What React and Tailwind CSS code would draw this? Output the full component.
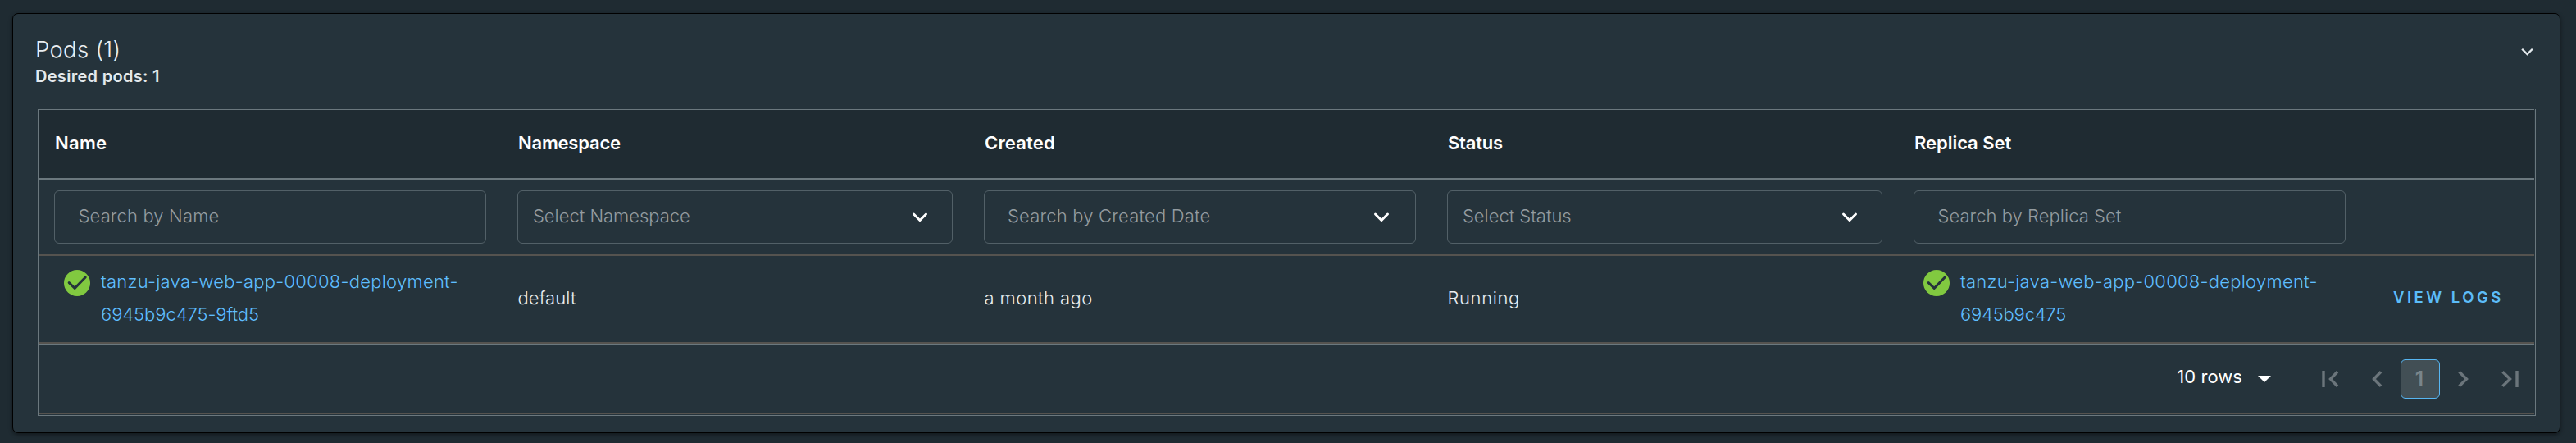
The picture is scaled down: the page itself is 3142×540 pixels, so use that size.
const COLUMNS =
  "grid grid-cols-[565px_569px_565px_569px_565px_1fr]";

function Chevron() {
  return (
    <svg className="h-[14px] w-[20px] shrink-0" viewBox="0 0 20 14" fill="none">
      <path d="M2.5 3 10 10.5l7.5-7.5" stroke="#fff" strokeWidth="3" strokeLinecap="round" strokeLinejoin="round" />
    </svg>
  );
}

function SuccessIcon() {
  return (
    <svg className="mt-[6px] h-8 w-8 shrink-0" viewBox="0 0 32 32">
      <circle cx="16" cy="16" r="16" fill="#81c940" />
      <path d="m6.2 15.6 7 6.8L26.2 9" fill="none" stroke="#25333b" strokeWidth="3" strokeLinecap="round" />
    </svg>
  );
}

function HeaderCell({ children, spacing }) {
  return (
    <div className={`flex items-center pb-[3px] pl-[20px] text-[22px] font-semibold text-white ${spacing}`}>
      {children}
    </div>
  );
}

function Field({ text, spacing, box, chevron }) {
  return (
    <div className="pt-[13px] pl-[19px]">
      <div className={`flex h-[65px] items-center justify-between rounded-[6px] border border-[#526067] ${box}`}>
        <span className={`pb-[3px] text-[22px] font-light text-[#949ca0] ${spacing}`}>{text}</span>
        {chevron && <Chevron />}
      </div>
    </div>
  );
}

function Value({ children, spacing }) {
  return (
    <div className={`flex items-center pb-[3px] pl-[19.5px] text-[22px] font-light text-[#e9eef1] ${spacing}`}>
      {children}
    </div>
  );
}

function ResourceLink({ first, second, secondSpacing }) {
  return (
    <div className="flex gap-[13px] pt-[11px] pl-[31px]">
      <SuccessIcon />
      <a className="text-[22px] leading-[40px] font-light text-[#5fbeff]">
        <span className="block tracking-[0.25px]">{first}</span>
        <span className={`block ${secondSpacing}`}>{second}</span>
      </a>
    </div>
  );
}

function PageIcon({ d, box }) {
  return (
    <svg className={`h-6 shrink-0 ${box}`} viewBox="0 0 24 24" fill="none" stroke="#6b757b" strokeWidth="3.4">
      <path d={d} />
    </svg>
  );
}

export default function App() {
  return (
    <div className="h-[540px] w-[3142px] overflow-hidden bg-[#1f2b32] pt-4 pl-[15px] font-['Inter',sans-serif]">
      <div className="h-[512px] w-[3108px] rounded-[7px] border border-black bg-[#25333b] shadow-[0_2px_5px_rgba(0,0,0,0.45)]">
        <div className="flex h-[116px] justify-between pl-[27px] pr-[32px]">
          <div className="pt-[24px]">
            <h2 className="text-[27.5px] leading-[38px] font-light tracking-[0.3px] text-[#e9eef1]">Pods (1)</h2>
            <p className="pt-[2px] text-[20px] leading-[25px] font-semibold tracking-[0.3px] text-[#e3e9ed]">Desired pods: 1</p>
          </div>
          <svg className="mt-[41px] h-[11px] w-[15px]" viewBox="0 0 15 11" fill="none">
            <path d="M2 2.6 7.5 8 13 2.6" stroke="#e3e9ed" strokeWidth="2.4" strokeLinecap="square" />
          </svg>
        </div>

        <div className="ml-[30px] w-[3047px] border-x border-b border-[#6b787e] pr-px pb-px">
          <div className={`${COLUMNS} h-[86px] border-t border-b-2 border-t-[#6b787e] border-b-[#6b787e] bg-[#1f2b32]`}>
            <HeaderCell spacing="tracking-[0.28px]">Name</HeaderCell>
            <HeaderCell spacing="tracking-[-0.2px]">Namespace</HeaderCell>
            <HeaderCell spacing="tracking-[0.19px]">Created</HeaderCell>
            <HeaderCell spacing="tracking-[-0.21px]">Status</HeaderCell>
            <HeaderCell spacing="tracking-[-0.04px]">Replica Set</HeaderCell>
            <div />
          </div>

          <div className={`${COLUMNS} h-[93px] border-b-2 border-[#55534f]`}>
            <Field text="Search by Name" spacing="tracking-[0.14px]" box="w-[527px] pl-[28.5px]" />
            <Field text="Select Namespace" spacing="tracking-[-0.03px]" box="w-[531px] pl-[18px] pr-[29px]" chevron />
            <Field text="Search by Created Date" spacing="tracking-[0.19px]" box="w-[527px] pl-[28px] pr-[31px]" chevron />
            <Field text="Select Status" spacing="tracking-[-0.04px]" box="w-[531px] pl-[18px] pr-[29px]" chevron />
            <Field text="Search by Replica Set" spacing="tracking-[0.04px]" box="w-[527px] pl-[28.5px]" />
            <div />
          </div>

          <div className={`${COLUMNS} h-[107px] border-b-2 border-[#55534f]`}>
            <ResourceLink
              first="tanzu-java-web-app-00008-deployment-"
              second="6945b9c475-9ftd5"
              secondSpacing="tracking-[-0.07px]"
            />
            <Value spacing="tracking-[0.1px]">default</Value>
            <Value spacing="tracking-[0.42px]">a month ago</Value>
            <Value spacing="tracking-[0.6px]">Running</Value>
            <ResourceLink
              first="tanzu-java-web-app-00008-deployment-"
              second="6945b9c475"
              secondSpacing="tracking-[-0.2px]"
            />
            <button className="flex items-center pb-[3px] pl-[39px] text-[18.5px] font-semibold tracking-[3.5px] text-[#5cbcf8]">
              VIEW LOGS
            </button>
          </div>

          <div className="flex h-[86px] items-center justify-end border-t border-b border-t-[#6b787e] border-b-[#55534f] pr-[18px]">
            <span className="pb-[5px] text-[22px] tracking-[0.05px] text-white">10 rows</span>
            <svg className="ml-[19px] h-2 w-4" viewBox="0 0 16 8">
              <path d="M0 0h16L8 8z" fill="#fff" />
            </svg>
            <PageIcon box="ml-[60px] w-6" d="M4 2v20M21 3.2 12.5 12l8.5 8.8" />
            <PageIcon box="ml-[34px] w-6" d="M16 3.2 7.5 12l8.5 8.8" />
            <div className="ml-[16px] flex h-12 w-12 items-center justify-center rounded-[6px] border border-[#57b6f2] bg-[#424f55] pr-[2px] pb-[2px] text-[24.5px] font-semibold text-[#79858b]">
              1
            </div>
            <PageIcon box="ml-[15px] w-6" d="M8.5 3.2 17.5 12l-9 8.8" />
            <PageIcon box="ml-[34px] w-6" d="M3.5 3.2 12.5 12l-9 8.8M21 2v20" />
          </div>
        </div>
      </div>
    </div>
  );
}
